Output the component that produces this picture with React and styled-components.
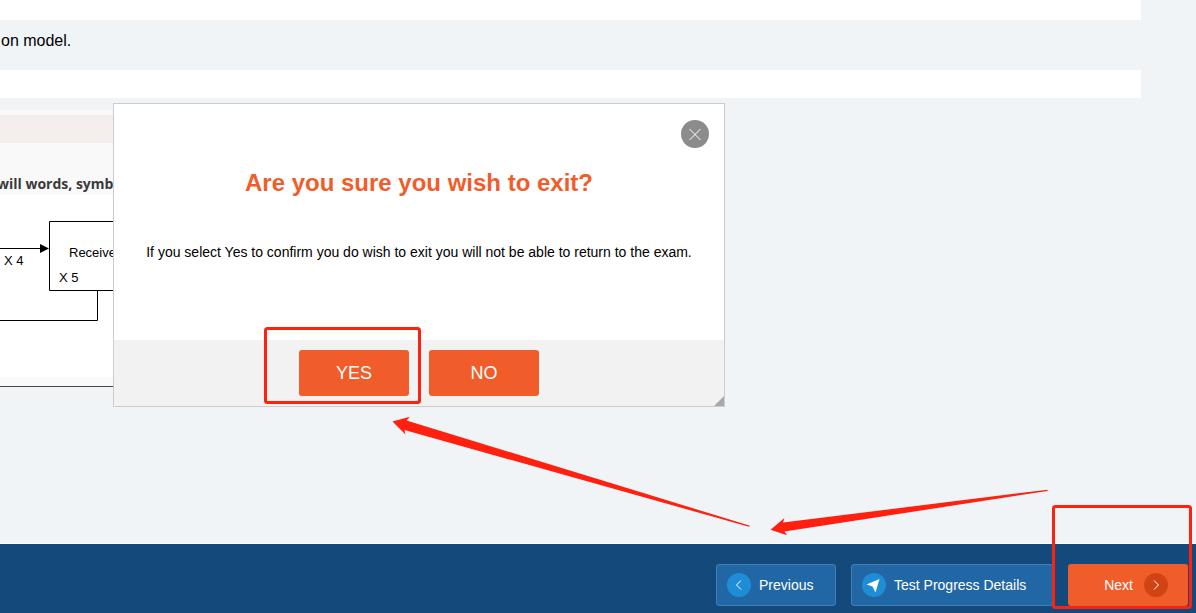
import React from "react";
import styled, { createGlobalStyle } from "styled-components";

const Global = createGlobalStyle`
  *, *::before, *::after { box-sizing: border-box; }
  body {
    margin: 0;
    background: #f0f4f7;
    font-family: "Liberation Sans", Arial, sans-serif;
    color: #000;
  }
  button { font-family: inherit; cursor: pointer; }
`;

const Page = styled.div`
  position: relative;
  display: flex;
  flex-direction: column;
  min-height: 100vh;
  overflow: hidden;
`;

const Content = styled.main`
  flex: 1;
  margin-right: 55px;
`;

const Band = styled.div`
  height: ${(p) => p.$height}px;
  background: #fff;
`;

const Question = styled.p`
  margin: 0;
  padding: 11px 0 19px 1px;
  font-size: 16px;
  line-height: 20px;
`;

const Figure = styled.figure`
  width: 50%;
  margin: 12px 0 0;
  padding: 5px 0 9px;
  background: #f9f9f9;
  border-bottom: 1px solid #444;
`;

const FigureHead = styled.div`
  height: 28px;
  background: #f4efec;
`;

const Caption = styled.figcaption`
  padding: 31px 0 1px;
  text-indent: -3px;
  font: bold 14px/20px "Open Sans", "Noto Sans", sans-serif;
  color: #3a3a3c;
`;

const Diagram = styled.svg`
  display: block;
  width: 100%;
  height: 182px;
  background: #fff;
  font: 13px "Liberation Sans", Arial, sans-serif;
`;

const Dialog = styled.section`
  position: absolute;
  left: 113px;
  top: 103px;
  width: 612px;
  display: flex;
  flex-direction: column;
  background: #fff;
  border: 1px solid #ccc;
`;

const DialogBody = styled.div`
  display: flex;
  flex-direction: column;
  padding: 16px 15px 78px;
`;

const Close = styled.button`
  align-self: flex-end;
  display: flex;
  width: 28px;
  height: 28px;
  padding: 0;
  border: 0;
  border-radius: 50%;
  background: #8c8c8c;
`;

const Title = styled.h1`
  margin: 19px 0 0;
  font-size: 24px;
  line-height: 32px;
  text-align: center;
  color: #f15d2a;
`;

const Message = styled.p`
  margin: 43px 0 0;
  font-size: 14px;
  line-height: 20px;
  text-align: center;
`;

const DialogActions = styled.div`
  position: relative;
  display: flex;
  justify-content: center;
  gap: 20px;
  padding: 10px;
  background: #f2f2f2;
`;

const Choice = styled.button`
  width: 110px;
  height: 46px;
  padding: 0;
  border: 0;
  border-radius: 3px;
  background: #f15d2a;
  color: #fff;
  font-size: 18px;
`;

const Grip = styled.svg`
  position: absolute;
  right: 0;
  bottom: 0;
`;

const Footer = styled.footer`
  display: flex;
  justify-content: flex-end;
  gap: 15px;
  padding: 20px 8px 7px;
  border-top: 1px solid #fff;
  background: #14497b;
`;

const NavButton = styled.button`
  display: flex;
  align-items: center;
  justify-content: ${(p) => (p.$primary ? "flex-end" : "flex-start")};
  gap: ${(p) => (p.$primary ? 11 : 8)}px;
  width: ${(p) => p.$width}px;
  height: 42px;
  padding: ${(p) => (p.$primary ? "0 20px" : "0 10px")};
  border: ${(p) => (p.$primary ? "0" : "1px solid #427fb3")};
  border-radius: 3px;
  background: ${(p) => (p.$primary ? "#f15d2a" : "#2267a5")};
  color: #fff;
  font-size: 14px;
  white-space: nowrap;
`;

const Disc = styled.svg`
  flex: none;
  border-radius: 50%;
  background: ${(p) => (p.$dark ? "#d04413" : "#1f8dd6")};
`;

const Markup = styled.svg`
  position: absolute;
  left: 0;
  top: 0;
  pointer-events: none;
`;

function ChevronDisc({ dark, d }) {
  return (
    <Disc $dark={dark} width="24" height="24" viewBox="0 0 24 24" aria-hidden="true">
      <path d={d} fill="none" stroke="#fff" strokeWidth="1" />
    </Disc>
  );
}

function ProcessDiagram() {
  return (
    <Diagram role="img" aria-label="Process diagram">
      <g fill="none" stroke="#000" strokeWidth="1">
        <path d="M0 53.5H42" />
        <path d="M300 26.5H49.5V95.5H300" />
        <path d="M97.5 95V125.5H0" />
      </g>
      <path d="M40 49L49 53.5L40 58Z" />
      <text x="4" y="70">X 4</text>
      <text x="69" y="62">Receive</text>
      <text x="59" y="87">X 5</text>
    </Diagram>
  );
}

export default function App() {
  return (
    <>
      <Global />
      <Page>
        <Content>
          <Band $height={20} />
          <Question>on model.</Question>
          <Band $height={28} />
          <Figure>
            <FigureHead />
            <Caption>will words, symb</Caption>
            <ProcessDiagram />
          </Figure>
        </Content>

        <Footer>
          <NavButton $width={120}>
            <ChevronDisc d="M14 7.5L9.5 12L14 16.5" />
            Previous
          </NavButton>
          <NavButton $width={202}>
            <Disc width="24" height="24" viewBox="0 0 24 24" aria-hidden="true">
              <path d="M17.5 6L4.5 11.5L10.5 13.5L13.5 19.5Z" fill="#fff" />
            </Disc>
            Test Progress Details
          </NavButton>
          <NavButton $primary $width={120}>
            Next
            <ChevronDisc dark d="M10 7.5L14.5 12L10 16.5" />
          </NavButton>
        </Footer>

        <Dialog role="dialog" aria-labelledby="exit-title">
          <DialogBody>
            <Close aria-label="Close">
              <svg width="28" height="28" viewBox="0 0 28 28" aria-hidden="true">
                <path d="M8.5 9L19.5 20M19.5 9L8.5 20" stroke="#fff" strokeWidth="1" />
              </svg>
            </Close>
            <Title id="exit-title">Are you sure you wish to exit?</Title>
            <Message>
              If you select Yes to confirm you do wish to exit you will not be able to return to the exam.
            </Message>
          </DialogBody>
          <DialogActions>
            <Choice>YES</Choice>
            <Choice>NO</Choice>
            <Grip width="10" height="10" aria-hidden="true">
              <path d="M10 0V10H0Z" fill="#a9a9a9" />
            </Grip>
          </DialogActions>
        </Dialog>

        <Markup width="1196" height="613" aria-hidden="true">
          <g fill="none" stroke="#ff2010" strokeWidth="3">
            <rect x="265.5" y="328.5" width="154" height="74" rx="2" />
            <rect x="1053.5" y="506.5" width="137" height="101" rx="2" />
          </g>
          <g fill="#ff2010">
            <path d="M392.5 421.5L410 416.7L406.5 420.5L750 525.7L749 526.8L404.5 430L405.5 434.5Z" />
            <path d="M770.5 529.7L784.5 518L783 522.5L1047.5 489.7V491L784.5 531.5L787 535.2Z" />
          </g>
        </Markup>
      </Page>
    </>
  );
}
